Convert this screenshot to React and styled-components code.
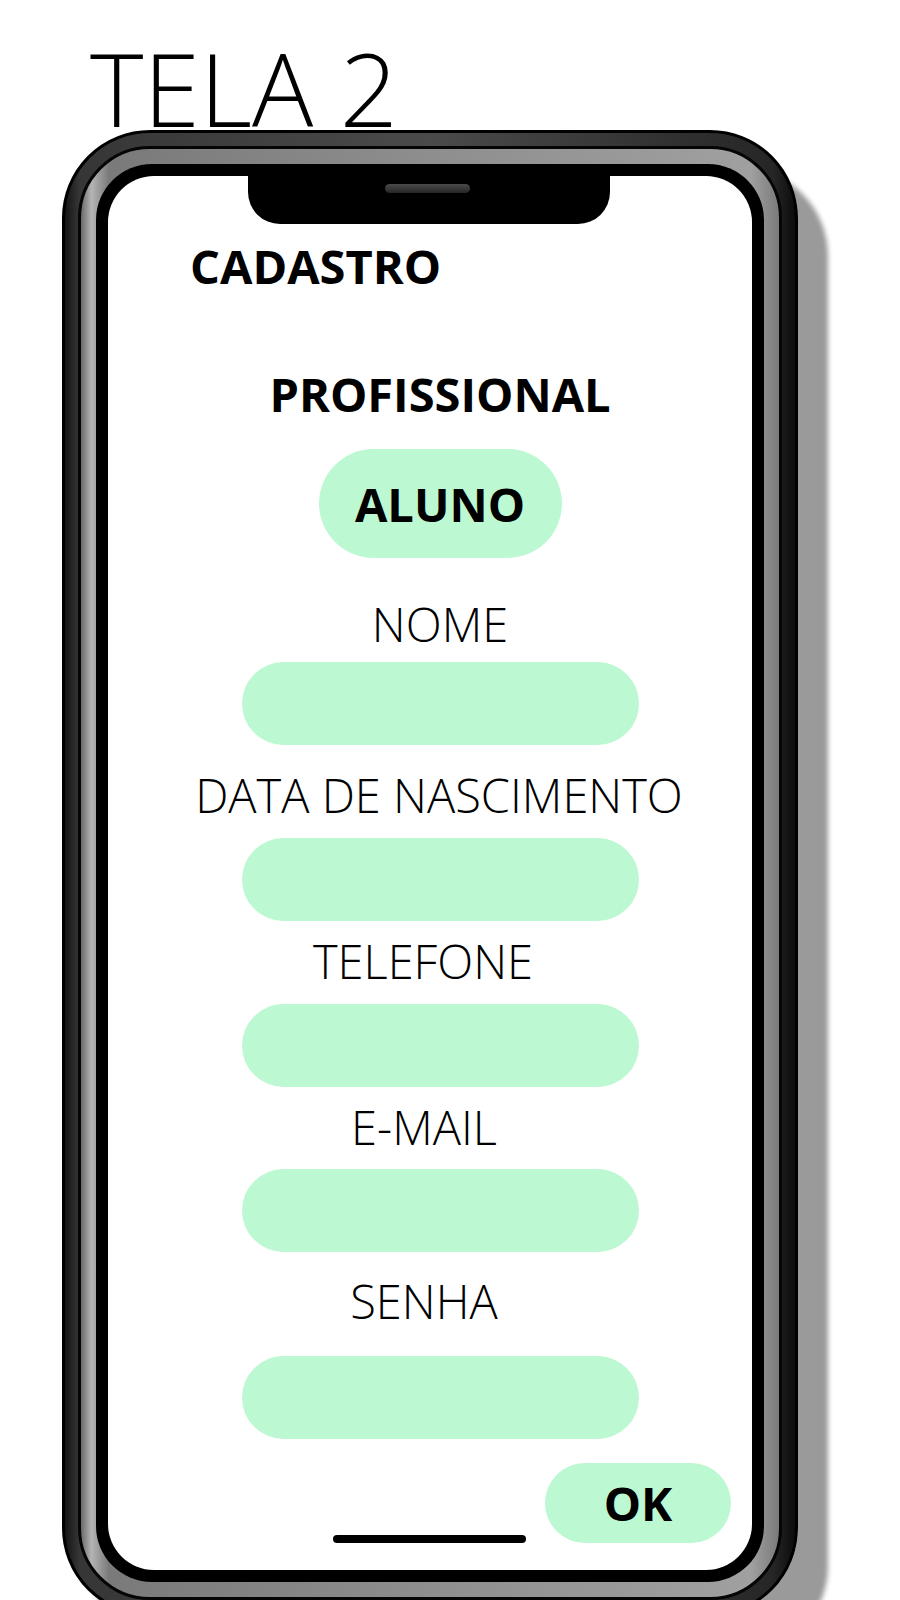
import React from 'react';
import styled, { createGlobalStyle } from 'styled-components';

const GlobalStyle = createGlobalStyle`
  html, body {
    margin: 0;
    padding: 0;
    background: #ffffff;
    font-family: 'Open Sans', 'Liberation Sans', sans-serif;
    overflow: hidden;
  }
`;

const Page = styled.div`
  width: 900px;
  height: 1600px;
  display: flex;
  flex-direction: column;
  overflow: hidden;
`;

const Title = styled.h1`
  margin: 46px 0 0 90px;
  font-size: 102px;
  font-weight: 300;
  line-height: 84px;
  color: #000;
  position: relative;
  z-index: 0;
`;

/* outer frame: thin black rim + dark metal band */
const Phone = styled.div`
  position: relative;
  z-index: 1;
  margin-left: 62px;
  width: 736px;
  padding: 13px;
  box-sizing: border-box;
  border: 3px solid #000;
  border-radius: 88px;
  background: linear-gradient(
    90deg,
    #151515 0%,
    #363636 2%,
    #4a4a4a 50%,
    #262626 97%,
    #0c0c0c 100%
  );
  box-shadow: 30px 38px 5px #9a9a9a;
`;

/* light metal band, separated from the dark one by a black line */
const Band = styled.div`
  padding: 15px;
  border: 3px solid #050505;
  border-radius: 72px;
  background: linear-gradient(
    90deg,
    #6a6a6a 0%,
    #b4b4b4 1.5%,
    #7a7a7a 4%,
    #8e8e8e 50%,
    #a0a0a0 96%,
    #7a7a7a 100%
  );
`;

const Bezel = styled.div`
  padding: 12px;
  border-radius: 56px;
  background: #000;
`;

const Screen = styled.div`
  position: relative;
  height: 1394px;
  box-sizing: border-box;
  border-radius: 46px;
  background: #fff;
  display: flex;
  flex-direction: column;
  align-items: center;
  padding: 67px 0 0 20px;
  overflow: hidden;
`;

const Notch = styled.div`
  position: absolute;
  top: 0;
  left: 140px;
  width: 362px;
  height: 48px;
  background: #000;
  border-radius: 0 0 32px 32px;
  display: flex;
  justify-content: center;
`;

const Speaker = styled.div`
  margin: 8px 0 0 -4px;
  width: 85px;
  height: 9px;
  border-radius: 5px;
  background: linear-gradient(180deg, #4a4a4a, #262626);
`;

const HomeBar = styled.div`
  position: absolute;
  bottom: 27px;
  left: 225px;
  width: 193px;
  height: 8px;
  border-radius: 4px;
  background: #000;
`;

const Heading = styled.div`
  font-size: 47px;
  font-weight: 700;
  line-height: 46px;
  color: #000;
  margin-top: ${p => p.$top || 0}px;
  align-self: ${p => (p.$left ? 'flex-start' : 'center')};
  margin-left: ${p => p.$left || 0}px;
`;

const Pill = styled.div`
  margin-top: ${p => p.$top || 0}px;
  width: ${p => p.$w}px;
  height: ${p => p.$h}px;
  border-radius: ${p => p.$h / 2}px;
  background: #bcf8d1;
  display: flex;
  align-items: center;
  justify-content: center;
  font-size: 47px;
  font-weight: 700;
  color: #000;
  box-sizing: border-box;
`;

const Label = styled.div`
  margin-top: ${p => p.$top}px;
  margin-left: ${p => p.$shift * 2 || 0}px;
  font-size: 47px;
  font-weight: 300;
  line-height: 46px;
  color: #000;
  white-space: nowrap;
`;

const Field = styled.input`
  margin-top: ${p => p.$top}px;
  width: 397px;
  height: 83px;
  border: none;
  outline: none;
  border-radius: 42px;
  background: #bcf8d1;
  padding: 0 30px;
  box-sizing: border-box;
  font-family: inherit;
  font-size: 30px;
`;

const Actions = styled.div`
  align-self: stretch;
  display: flex;
  justify-content: flex-end;
  padding-right: 21px;
`;

const fields = [
  { label: 'NOME', labelTop: 43, fieldTop: 15, shift: 0 },
  { label: 'DATA DE NASCIMENTO', labelTop: 27, fieldTop: 20, shift: -1 },
  { label: 'TELEFONE', labelTop: 17, fieldTop: 20, shift: -17 },
  { label: 'E-MAIL', labelTop: 17, fieldTop: 19, shift: -16 },
  { label: 'SENHA', labelTop: 26, fieldTop: 32, shift: -16 },
];

const App = () => (
  <Page>
    <GlobalStyle />
    <Title>TELA 2</Title>
    <Phone>
      <Band>
        <Bezel>
          <Screen>
            <Notch>
              <Speaker />
            </Notch>
            <Heading $left={62}>CADASTRO</Heading>
            <Heading $top={82}>PROFISSIONAL</Heading>
            <Pill $top={32} $w={243} $h={109}>ALUNO</Pill>
            {fields.map(f => (
              <React.Fragment key={f.label}>
                <Label $top={f.labelTop} $shift={f.shift}>{f.label}</Label>
                <Field
                  $top={f.fieldTop}
                  type={f.label === 'SENHA' ? 'password' : 'text'}
                  aria-label={f.label}
                />
              </React.Fragment>
            ))}
            <Actions>
              <Pill $top={24} $w={186} $h={80}>OK</Pill>
            </Actions>
            <HomeBar />
          </Screen>
        </Bezel>
      </Band>
    </Phone>
  </Page>
);

export default App;
